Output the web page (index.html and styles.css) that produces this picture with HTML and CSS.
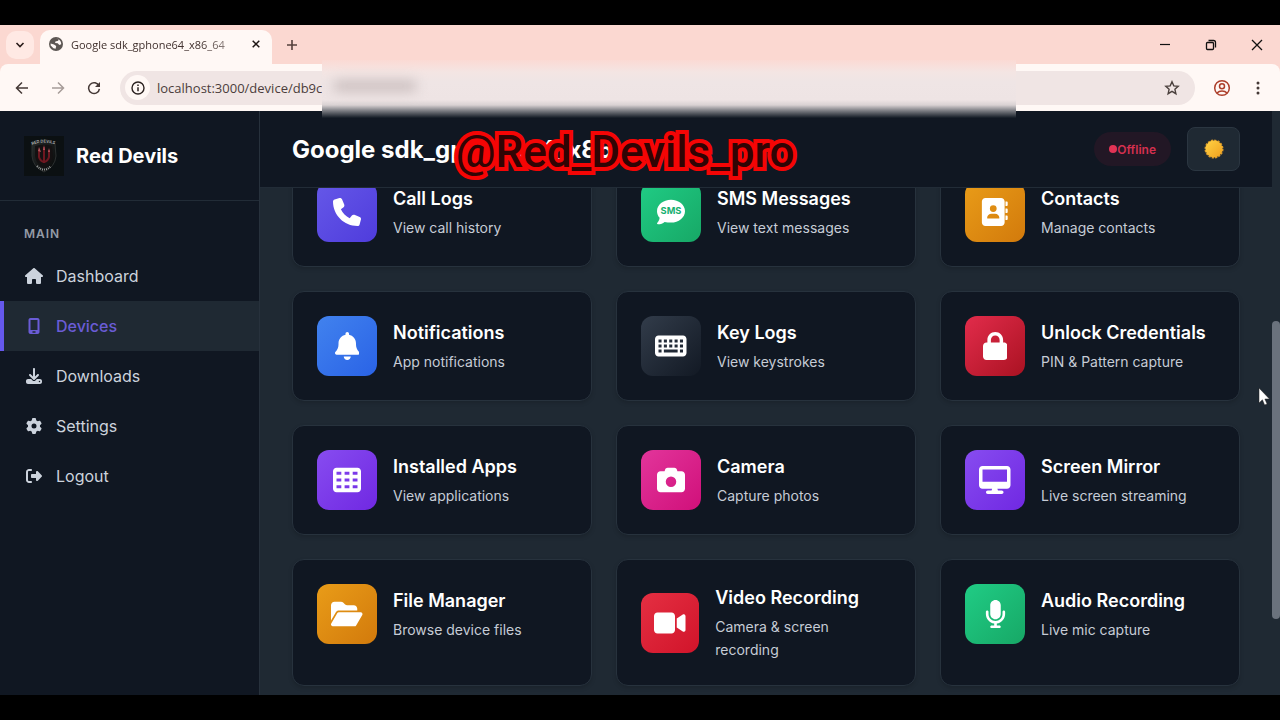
FILE: index.html
```html
<!DOCTYPE html>
<html lang="en">
<head>
    <meta charset="UTF-8">
    <meta name="viewport" content="width=device-width, initial-scale=1.0">
    <title>Google sdk_gphone64_x86_64</title>
    <link rel="stylesheet" href="styles.css">
</head>
<body>
    <div class="browser">
        <div class="tabstrip">
            <button class="tab-search" aria-label="Search tabs">
                <svg width="10" height="10" viewBox="0 0 10 10"><path d="M1.500 3L5 6.500 8.500 3" fill="none" stroke="#2b1d1b" stroke-width="1.600"/></svg>
            </button>
            <div class="tab">
                <svg width="14" height="14" viewBox="0 0 14 14"><circle cx="7" cy="7" r="7" fill="#5c5653"/><path d="M1.600 6.600L5 7.400 7.200 9l-.6 2.800-2.200-.6-2.700-2.600zM7.200 1.500l2.400.8-.4 1.500-2.800.8-.3 1.300 2.600.3L10.300 8l1.900-.7c.3-2.800-2-5.700-5-5.800z" fill="#fff8f6"/></svg>
                <span class="tab-title">Google sdk_gphone64_x86_64</span>
                <button class="tab-close" aria-label="Close tab">
                    <svg width="8" height="8" viewBox="0 0 8 8"><path d="M.7.7l6.600 6.600M7.300.7L.7 7.300" stroke="#1d1513" stroke-width="1.500"/></svg>
                </button>
            </div>
            <button class="tab-new" aria-label="New tab">
                <svg width="12" height="12" viewBox="0 0 12 12"><path d="M6 1v10M1 6h10" stroke="#55403c" stroke-width="1.600"/></svg>
            </button>
            <div class="window-buttons">
                <button aria-label="Minimize"><svg width="12" height="12" viewBox="0 0 12 12"><path d="M1 5.500h10" stroke="#111" stroke-width="1.200"/></svg></button>
                <button aria-label="Restore"><svg width="12" height="12" viewBox="0 0 12 12" fill="none" stroke="#111" stroke-width="1.300"><rect x="1.500" y="3.500" width="7" height="7" rx="1"/><path d="M3.500 1.500h5a2 2 0 0 1 2 2v5"/></svg></button>
                <button aria-label="Close"><svg width="12" height="12" viewBox="0 0 12 12"><path d="M1 1l10 10M11 1L1 11" stroke="#111" stroke-width="1.300"/></svg></button>
            </div>
        </div>
        <div class="toolbar">
            <button aria-label="Back"><svg width="14" height="14" viewBox="0 0 14 14" fill="none" stroke="#453936" stroke-width="1.500"><path d="M13 7H2M7 1.500L1.500 7 7 12.500"/></svg></button>
            <button aria-label="Forward"><svg width="14" height="14" viewBox="0 0 14 14" fill="none" stroke="#a79c99" stroke-width="1.500"><path d="M1 7h11M7 1.500L12.500 7 7 12.500"/></svg></button>
            <button aria-label="Reload"><svg width="14" height="14" viewBox="0 0 14 14"><path d="M12 5A5.400 5.400 0 1 0 12.400 7.800" fill="none" stroke="#453936" stroke-width="1.500"/><path d="M13 1v5H8z" fill="#453936"/></svg></button>
            <div class="omnibox">
                <button class="site-info" aria-label="Site information">
                    <svg width="14" height="14" viewBox="0 0 14 14"><circle cx="7" cy="7" r="6" fill="none" stroke="#2b2220" stroke-width="1.400"/><path d="M7 6.200v4.100M7 3.500V5" stroke="#2b2220" stroke-width="1.500"/></svg>
                </button>
                <input class="url" type="text" aria-label="Address" value="localhost:3000/device/db9c">
                <button aria-label="Bookmark"><svg width="16" height="16" viewBox="0 0 16 16"><path d="M8 1.800l1.800 4.100 4.400.4-3.300 3 1 4.400L8 11.400l-3.900 2.300 1-4.400-3.300-3 4.400-.4z" fill="none" stroke="#4b403d" stroke-width="1.400"/></svg></button>
            </div>
            <button class="profile" aria-label="Profile"><svg width="18" height="18" viewBox="0 0 18 18" fill="none" stroke="#ad3f2b" stroke-width="1.500"><circle cx="9" cy="9" r="7.300"/><circle cx="9" cy="7.300" r="2.500"/><path d="M4 14c2.500-2.700 7.500-2.700 10 0"/></svg></button>
            <button aria-label="Menu"><svg width="4" height="14" viewBox="0 0 4 14" fill="#453936"><circle cx="2" cy="2" r="1.500"/><circle cx="2" cy="7" r="1.500"/><circle cx="2" cy="12" r="1.500"/></svg></button>
        </div>
        <div class="redaction"><span class="smudge"></span></div>
    </div>

    <div class="app">
        <aside class="sidebar">
            <div class="brand">
                <svg class="brand-logo" width="40" height="40" viewBox="0 0 40 40">
                    <defs>
                        <linearGradient id="shield" x1="0" y1="0" x2="1" y2="1"><stop offset="0" stop-color="#252a2a"/><stop offset="1" stop-color="#080909"/></linearGradient>
                        <path id="arcTop" d="M8 9q12-5 24 0"/>
                    </defs>
                    <rect width="40" height="40" fill="#0b1012"/>
                    <path d="M8 8q12-4 23 0l1 12q-1 11-12 16Q9 31 8 20z" fill="url(#shield)" stroke="#2c3030"/>
                    <path d="M11 10q9-3 17 0l1 10q-1 8-9 12-8-4-9-12z" fill="#141112"/>
                    <g fill="none" stroke="#6e1720" stroke-width="2"><path d="M20 11v16M15 14v7q1 4 5 5M25 14v7q-1 4-5 5"/></g>
                    <path d="M14 15l1-4 2 5zM19 14l1-5 1 5zM24 16l1-4 1 4z" fill="#b0555c"/>
                    <g font-family="Inter, sans-serif" font-size="4" font-weight="700" fill="#a5a8a8"><text><textPath href="#arcTop">RED DEVILS</textPath></text></g>
                    <path d="M13 30q7 7 14 0" fill="none" stroke="#9a9d9d" stroke-width="2" stroke-dasharray="1 1"/>
                </svg>
                <span class="brand-name">Red Devils</span>
            </div>
            <nav class="nav">
                <div class="nav-title">MAIN</div>
                <a class="nav-item" href="#"><svg viewBox="0 0 576 512"><path d="M575.800 255.500c0 18-15 32.100-32 32.100h-32l.7 160.200c0 2.700-.2 5.400-.5 8.100V472c0 22.100-17.900 40-40 40H392c-22.100 0-40-17.900-40-40v-88c0-17.700-14.300-32-32-32h-64c-17.700 0-32 14.300-32 32v88c0 22.100-17.900 40-40 40h-80c-22.100 0-40-17.900-40-40V287.600H32c-18 0-32-14-32-32.100 0-9 3-17 10-24L266.400 8c7-7 15-8 22-8s15 2 21 7l255.400 224.500c8 7 12 15 11 24z"/></svg><span>Dashboard</span></a>
                <a class="nav-item active" href="#"><svg viewBox="0 0 384 512"><path fill-rule="evenodd" d="M80 0h224c35 0 64 29 64 64v384c0 35-29 64-64 64H80c-35 0-64-29-64-64V64C16 29 45 0 80 0zm0 64v320h224V64zm80 360q-24 0-24 24t24 24h64q24 0 24-24t-24-24z"/></svg><span>Devices</span></a>
                <a class="nav-item" href="#"><svg viewBox="0 0 512 512"><path fill-rule="evenodd" d="M288 32c0-17.700-14.300-32-32-32s-32 14.300-32 32v242.700l-73.400-73.400c-12.500-12.500-32.800-12.500-45.300 0s-12.500 32.800 0 45.300l128 128c12.500 12.500 32.800 12.500 45.300 0l128-128c12.500-12.500 12.500-32.800 0-45.300s-32.800-12.500-45.300 0L288 274.700V32zM64 352c-35.300 0-64 28.700-64 64v32c0 35.300 28.700 64 64 64h384c35.300 0 64-28.700 64-64v-32c0-35.300-28.700-64-64-64H346.500l-45.300 45.300c-25 25-65.500 25-90.500 0L165.500 352H64zm368 56a24 24 0 1 1 0 48 24 24 0 1 1 0-48z"/></svg><span>Downloads</span></a>
                <a class="nav-item" href="#"><svg viewBox="0 0 512 512"><path fill-rule="evenodd" d="M495.900 166.600c3.200 8.700.5 18.400-6.400 24.600l-43.300 39.400c1.100 8.300 1.700 16.800 1.700 25.400s-.6 17.100-1.700 25.400l43.300 39.400c6.900 6.200 9.600 15.900 6.400 24.600-4.400 11.900-9.700 23.300-15.800 34.300l-4.700 8.100c-6.600 11-14 21.400-22.100 31.200-5.900 7.200-15.700 9.600-24.500 6.800l-55.700-17.700c-13.400 10.300-28.200 18.900-44 25.400l-12.500 57.100c-2 9.100-9 16.300-18.200 17.800-13.800 2.300-28 3.500-42.500 3.500s-28.700-1.200-42.500-3.500c-9.200-1.500-16.200-8.700-18.200-17.800l-12.500-57.100c-15.800-6.500-30.600-15.100-44-25.400l-55.600 17.800c-8.800 2.800-18.600.3-24.500-6.800-8.100-9.800-15.500-20.200-22.100-31.200l-4.700-8.100c-6.100-11-11.400-22.400-15.800-34.300-3.200-8.700-.5-18.400 6.400-24.600l43.300-39.400C64.600 273.100 64 264.600 64 256s.6-17.100 1.700-25.400l-43.300-39.400c-6.900-6.200-9.600-15.900-6.400-24.600 4.400-11.900 9.700-23.300 15.800-34.300l4.700-8.100c6.600-11 14-21.400 22.100-31.200 5.900-7.200 15.700-9.600 24.500-6.800l55.700 17.700c13.400-10.300 28.200-18.900 44-25.400l12.500-57.100c2-9.100 9-16.300 18.200-17.800C227.300 1.200 241.500 0 256 0s28.700 1.200 42.500 3.500c9.200 1.500 16.200 8.700 18.200 17.800l12.500 57.100c15.800 6.500 30.600 15.100 44 25.400l55.700-17.700c8.800-2.800 18.600-.3 24.500 6.800 8.100 9.800 15.500 20.200 22.100 31.200l4.700 8.100c6.100 11 11.400 22.400 15.800 34.300zM256 336a80 80 0 1 0 0-160 80 80 0 1 0 0 160z"/></svg><span>Settings</span></a>
                <a class="nav-item" href="#"><svg viewBox="0 0 512 512"><path d="M377.900 105.900l122.800 122.800c7.200 7.200 11.300 17.100 11.300 27.300s-4.100 20.100-11.300 27.300L377.900 406.100c-6.400 6.400-15 9.900-24 9.900-18.700 0-33.900-15.200-33.900-33.900V320H192c-17.700 0-32-14.300-32-32v-64c0-17.700 14.300-32 32-32h128v-62.100c0-18.700 15.200-33.900 33.900-33.900 9 0 17.600 3.600 24 9.900zM160 96H96c-17.700 0-32 14.300-32 32v256c0 17.700 14.300 32 32 32h64c17.700 0 32 14.300 32 32s-14.300 32-32 32H96c-53 0-96-43-96-96V128c0-53 43-96 96-96h64c17.700 0 32 14.300 32 32s-14.300 32-32 32z"/></svg><span>Logout</span></a>
            </nav>
        </aside>

        <main class="main">
            <header class="header">
                <h1>Google sdk_gphone64_x86_64</h1>
                <span class="status"><span class="dot"></span>Offline</span>
                <button class="theme" aria-label="Toggle theme">
                    <svg width="20" height="20" viewBox="0 0 20 20">
                        <defs><linearGradient id="sun" x1="0" y1="0" x2="1" y2="1"><stop offset="0" stop-color="#ffd244"/><stop offset="1" stop-color="#f0a01e"/></linearGradient></defs>
                        <circle cx="10" cy="10" r="8.500" fill="none" stroke="#d99a2b" stroke-width="2" stroke-dasharray="2.200 1.138"/>
                        <circle cx="10" cy="10" r="8.500" fill="url(#sun)"/>
                    </svg>
                </button>
                <div class="watermark">@Red_Devils_pro</div>
            </header>

            <section class="content">
                <div class="grid">
                    <a class="card" href="#">
                        <div class="card-body">
                            <div class="icon indigo"><svg viewBox="0 0 512 512"><path d="M164.900 24.600c-7.700-18.600-28-28.500-47.400-23.200l-88 24C12.100 30.200 0 46 0 64c0 247.400 200.600 448 448 448 18 0 33.800-12.100 38.600-29.500l24-88c5.300-19.400-4.600-39.700-23.200-47.400l-96-40c-16.300-6.800-35.200-2.100-46.300 11.600L304.700 368C234.300 334.700 177.300 277.700 144 207.300l49.300-40.300c13.700-11.200 18.400-30 11.600-46.300l-40-96z"/></svg></div>
                            <div class="info"><h3>Call Logs</h3><p>View call history</p></div>
                        </div>
                    </a>
                    <a class="card" href="#">
                        <div class="card-body">
                            <div class="icon green"><svg viewBox="0 0 512 512"><path d="M256 448c141 0 256-93 256-208S397 32 256 32 0 125 0 240c0 45 18 87 48 121-4 38-21 68-42 92-13 17-3 27 13 27 48 0 91-19 120-43 35 7 75 11 117 11z"/><text x="256" y="296" text-anchor="middle" font-family="Inter, sans-serif" font-weight="700" font-size="170" fill="#18b06f">SMS</text></svg></div>
                            <div class="info"><h3>SMS Messages</h3><p>View text messages</p></div>
                        </div>
                    </a>
                    <a class="card" href="#">
                        <div class="card-body">
                            <div class="icon orange"><svg viewBox="0 0 512 512"><path fill-rule="evenodd" d="M80 0h288c35 0 64 29 64 64v384c0 35-29 64-64 64H80c-35 0-64-29-64-64V64C16 29 45 0 80 0zm144 256a62 62 0 1 0 0-124 62 62 0 1 0 0 124zm-32 32c-46 0-80 34-80 76q0 12 12 12h200q12 0 12-12c0-42-34-76-80-76z"/><path d="M448 64h24q16 0 16 16v48q0 16-16 16h-24zM448 192h24q16 0 16 16v48q0 16-16 16h-24zM448 320h24q16 0 16 16v48q0 16-16 16h-24z"/></svg></div>
                            <div class="info"><h3>Contacts</h3><p>Manage contacts</p></div>
                        </div>
                    </a>
                    <a class="card" href="#">
                        <div class="card-body">
                            <div class="icon blue"><svg viewBox="0 0 448 512"><path d="M224 0c-17.700 0-32 14.300-32 32v19.200C119 66 64 130.600 64 208v18.800c0 47-17.300 92.400-48.500 127.600l-7.400 8.300c-8.400 9.400-10.400 22.900-5.300 34.400S19.400 416 32 416h384c12.600 0 24-7.400 29.200-18.900s3.100-25-5.300-34.400l-7.400-8.300C401.300 319.200 384 273.900 384 226.800V208c0-77.400-55-142-128-156.800V32c0-17.700-14.300-32-32-32zm45.300 493.300c12-12 18.700-28.300 18.700-45.300H160c0 17 6.700 33.300 18.700 45.300S207 512 224 512s33.300-6.700 45.300-18.700z"/></svg></div>
                            <div class="info"><h3>Notifications</h3><p>App notifications</p></div>
                        </div>
                    </a>
                    <a class="card" href="#">
                        <div class="card-body">
                            <div class="icon slate"><svg viewBox="0 0 576 512"><path fill-rule="evenodd" d="M64 64h448c35 0 64 29 64 64v256c0 35-29 64-64 64H64c-35 0-64-29-64-64V128c0-35 29-64 64-64zm0 72v56h56v-56zm98 0v56h56v-56zm98 0v56h56v-56zm98 0v56h56v-56zm98 0v56h56v-56zM64 228v56h56v-56zm98 0v56h56v-56zm98 0v56h56v-56zm98 0v56h56v-56zm98 0v56h56v-56zM64 320v56h56v-56zm98 0v56h252v-56zm294 0v56h56v-56z"/></svg></div>
                            <div class="info"><h3>Key Logs</h3><p>View keystrokes</p></div>
                        </div>
                    </a>
                    <a class="card" href="#">
                        <div class="card-body">
                            <div class="icon crimson"><svg viewBox="0 0 448 512"><path fill-rule="evenodd" d="M144 144v48h160v-48c0-44.200-35.800-80-80-80s-80 35.800-80 80zm-64 48v-48C80 64.500 144.500 0 224 0s144 64.500 144 144v48h16c35.300 0 64 28.700 64 64v192c0 35.300-28.700 64-64 64H64c-35.300 0-64-28.700-64-64V256c0-35.300 28.700-64 64-64h16z"/></svg></div>
                            <div class="info"><h3>Unlock Credentials</h3><p>PIN &amp; Pattern capture</p></div>
                        </div>
                    </a>
                    <a class="card" href="#">
                        <div class="card-body">
                            <div class="icon violet"><svg viewBox="0 0 512 512"><path fill-rule="evenodd" d="M64 32h384c35 0 64 29 64 64v320c0 35-29 64-64 64H64c-35 0-64-29-64-64V96c0-35 29-64 64-64zm0 72v56h88v-56zm148 0v56h88v-56zm148 0v56h88v-56zM64 228v56h88v-56zm148 0v56h88v-56zm148 0v56h88v-56zM64 352v56h88v-56zm148 0v56h88v-56zm148 0v56h88v-56z"/></svg></div>
                            <div class="info"><h3>Installed Apps</h3><p>View applications</p></div>
                        </div>
                    </a>
                    <a class="card" href="#">
                        <div class="card-body">
                            <div class="icon pink"><svg viewBox="0 0 512 512"><path fill-rule="evenodd" d="M149.100 64.800L138.700 96H64c-35.300 0-64 28.700-64 64v256c0 35.300 28.700 64 64 64h384c35.300 0 64-28.700 64-64V160c0-35.300-28.700-64-64-64h-74.700l-10.400-31.200C356.400 45.200 338.100 32 317.400 32H194.600c-20.700 0-39 13.200-45.500 32.800zM256 192a96 96 0 1 1 0 192 96 96 0 1 1 0-192z"/></svg></div>
                            <div class="info"><h3>Camera</h3><p>Capture photos</p></div>
                        </div>
                    </a>
                    <a class="card" href="#">
                        <div class="card-body">
                            <div class="icon violet"><svg viewBox="0 0 576 512"><path fill-rule="evenodd" d="M64 0C28.700 0 0 28.700 0 64v288c0 35.300 28.700 64 64 64h176l-10.700 32H160c-17.700 0-32 14.300-32 32s14.300 32 32 32h256c17.700 0 32-14.300 32-32s-14.300-32-32-32h-69.300L336 416h176c35.300 0 64-28.700 64-64V64c0-35.300-28.700-64-64-64H64zm448 64v224H64V64h448z"/></svg></div>
                            <div class="info"><h3>Screen Mirror</h3><p>Live screen streaming</p></div>
                        </div>
                    </a>
                    <a class="card" href="#">
                        <div class="card-body">
                            <div class="icon orange"><svg viewBox="0 0 576 512"><path d="M88.700 223.800L0 375.800V96c0-35.300 28.700-64 64-64h117.500c17 0 33.300 6.700 45.300 18.700l26.500 26.500c12 12 28.300 18.700 45.300 18.700H416c35.300 0 64 28.700 64 64v32H144c-22.800 0-43.800 12.100-55.300 31.800zm27.600 16.100C122.100 230 132.600 224 144 224h400c11.500 0 22 6.100 27.700 16.100s5.700 22.200-.1 32.100l-112 192C453.900 474 443.400 480 432 480H32c-11.500 0-22-6.100-27.700-16.100s-5.700-22.200.1-32.100l112-192z"/></svg></div>
                            <div class="info"><h3>File Manager</h3><p>Browse device files</p></div>
                        </div>
                    </a>
                    <a class="card" href="#">
                        <div class="card-body">
                            <div class="icon red"><svg viewBox="0 0 576 512"><path d="M0 128c0-35.300 28.700-64 64-64h256c35.300 0 64 28.700 64 64v256c0 35.300-28.700 64-64 64H64c-35.300 0-64-28.700-64-64V128zm559.100-28.200c10.400 5.600 16.900 16.400 16.900 28.200v256c0 11.800-6.500 22.600-16.900 28.200s-23 5-32.900-1.600l-96-64-14.200-9.500V174.900l14.200-9.500 96-64c9.800-6.500 22.400-7.200 32.900-1.600z"/></svg></div>
                            <div class="info"><h3>Video Recording</h3><p>Camera &amp; screen recording</p></div>
                        </div>
                    </a>
                    <a class="card" href="#">
                        <div class="card-body">
                            <div class="icon green"><svg viewBox="0 0 384 512"><path d="M192 0c-53 0-96 43-96 96v160c0 53 43 96 96 96s96-43 96-96V96c0-53-43-96-96-96zM64 216c0-13.300-10.700-24-24-24s-24 10.700-24 24v40c0 89.100 66.200 162.700 152 174.400V464h-48c-13.300 0-24 10.700-24 24s10.700 24 24 24h144c13.300 0 24-10.700 24-24s-10.700-24-24-24h-48v-33.600c85.800-11.700 152-85.300 152-174.400v-40c0-13.300-10.700-24-24-24s-24 10.700-24 24v40c0 70.700-57.300 128-128 128S64 326.700 64 256v-40z"/></svg></div>
                            <div class="info"><h3>Audio Recording</h3><p>Live mic capture</p></div>
                        </div>
                    </a>
                </div>
            </section>
        </main>

        <div class="scrollbar"><div class="thumb"></div></div>
        <svg class="cursor" width="12" height="20" viewBox="0 0 12 20"><path d="M1 1v15l3.400-3.200L6.600 18l2.500-1-2.200-5h4.600z" fill="#fff" stroke="#222" stroke-width=".5"/></svg>
    </div>
</body>
</html>
```
FILE: styles.css
```css
* {
    box-sizing: border-box;
    margin: 0;
    padding: 0;
}

body {
    display: flex;
    flex-direction: column;
    height: 100vh;
    padding: 25px 0;
    overflow: hidden;
    background: #000;
    color: #fff;
    font-family: Inter, "Liberation Sans", sans-serif;
}

button {
    display: flex;
    align-items: center;
    justify-content: center;
    border: 0;
    background: none;
    cursor: pointer;
}

a {
    color: inherit;
    text-decoration: none;
}

/* browser */
.browser {
    position: relative;
    flex: none;
    z-index: 2;
    background: #fbd8d1;
    font-family: "Open Sans", "Noto Sans", sans-serif;
}

.tabstrip {
    display: flex;
    align-items: center;
    height: 39px;
    padding-left: 6px;
}

.tab-search {
    width: 28px;
    height: 28px;
    border-radius: 10px;
    background: #ffe9e4;
}

.tab {
    display: flex;
    align-items: center;
    align-self: flex-end;
    gap: 8px;
    width: 232px;
    height: 34px;
    margin-left: 6px;
    padding: 0 12px 6px 9px;
    border-radius: 10px 10px 0 0;
    background: #fff8f5;
}

.tab svg {
    flex: none;
}

.tab-title {
    flex: 1;
    white-space: nowrap;
    font-size: 11px;
    color: #40302d;
    -webkit-mask-image: linear-gradient(90deg, #000 80%, rgba(0, 0, 0, .5));
}

.tab-close {
    width: 8px;
    margin-left: 12px;
}

.tab-new {
    width: 40px;
    height: 28px;
}

.window-buttons {
    display: flex;
    margin-left: auto;
}

.window-buttons button {
    width: 46px;
    height: 38px;
}

.toolbar {
    display: flex;
    align-items: center;
    height: 47px;
    padding: 0 20px 0 4px;
    border-radius: 8px 8px 0 0;
    background: #fff8f5;
}

.toolbar > button {
    width: 36px;
    height: 34px;
}

.omnibox {
    display: flex;
    flex: 1;
    align-items: center;
    height: 34px;
    margin-left: 8px;
    padding: 0 15px 0 5px;
    border-radius: 17px;
    background: #f0e5e4;
}

.site-info {
    width: 25px;
    height: 25px;
    border-radius: 50%;
    background: #fff8f5;
}

.url {
    flex: 1;
    margin-left: 7px;
    border: 0;
    outline: 0;
    background: none;
    color: #4b3d3b;
    font: 13px "Open Sans", "Noto Sans", sans-serif;
}

.toolbar .profile {
    margin-left: 9px;
}

.toolbar > button:last-child {
    width: 4px;
    margin-left: 16px;
}

/* blurred strip over the rest of the address */
.redaction {
    position: absolute;
    left: 322px;
    right: 264px;
    top: 35px;
    bottom: -7px;
    background: linear-gradient(#fbdad4 0, #f4e5e3 12px, #efe5e5 22px, #eee4e4 40px, #d9d2d3 45px, #77797f 51px, #111923 100%);
}

.smudge {
    position: absolute;
    left: 12px;
    top: 20px;
    width: 82px;
    height: 12px;
    background: #cdc1c1;
    filter: blur(6px);
}

/* app */
.app {
    position: relative;
    display: flex;
    flex: 1;
    min-height: 0;
    background: #1f2933;
}

.sidebar {
    flex: none;
    width: 260px;
    border-right: 1px solid #27313c;
    background: #101722;
}

.brand {
    display: flex;
    align-items: center;
    gap: 12px;
    height: 90px;
    padding: 0 24px;
    border-bottom: 1px solid #222c37;
}

.brand-name {
    font-size: 20px;
    font-weight: 700;
}

.nav-title {
    padding: 24px 24px 8px;
    font-size: 12px;
    font-weight: 600;
    line-height: 18px;
    letter-spacing: 1px;
    color: #949ba6;
}

.nav-item {
    display: flex;
    align-items: center;
    gap: 12px;
    height: 50px;
    padding-left: 24px;
    font-size: 16px;
    color: #ccd3dd;
}

.nav-item svg {
    width: 20px;
    height: 16px;
    fill: currentColor;
}

.nav-item.active {
    padding-left: 20px;
    border-left: 4px solid #6558ec;
    background: #1f2933;
    color: #6a5cd6;
    font-weight: 500;
}

.main {
    display: flex;
    flex: 1;
    flex-direction: column;
    min-width: 0;
}

.header {
    position: relative;
    display: flex;
    flex: none;
    align-items: center;
    height: 77px;
    padding: 0 32px;
    border-bottom: 1px solid #222c37;
    background: #101722;
}

.header h1 {
    font-size: 24px;
    font-weight: 700;
}

.status {
    display: flex;
    align-items: center;
    height: 34px;
    margin-left: auto;
    padding: 0 15px;
    border-radius: 17px;
    background: #221725;
    color: #d4304f;
    font-size: 12px;
    font-weight: 600;
}

.dot {
    width: 8px;
    height: 8px;
    border-radius: 50%;
    background: #e23355;
}

.theme {
    width: 53px;
    height: 44px;
    margin-left: 16px;
    border: 1px solid #2b3641;
    border-radius: 8px;
    background: #1f2933;
}

.watermark {
    position: absolute;
    left: 196px;
    top: 16px;
    color: #300404;
    font: 500 44px/50px Roboto, sans-serif;
    -webkit-text-stroke: 8px #f50505;
    paint-order: stroke fill;
}

/* the list stays scrolled to its last row */
.content {
    display: flex;
    flex: 1;
    flex-direction: column;
    justify-content: flex-end;
    min-height: 0;
    padding: 0 32px 9px;
    overflow: hidden;
}

.grid {
    display: grid;
    grid-template-columns: repeat(3, 1fr);
    gap: 24px;
}

.card {
    padding: 24px;
    border: 1px solid #27323d;
    border-radius: 12px;
    background: #101722;
    box-shadow: 0 2px 4px rgba(0, 0, 0, .15);
}

.card-body {
    display: flex;
    align-items: center;
    gap: 16px;
}

.icon {
    display: flex;
    align-items: center;
    justify-content: center;
    width: 60px;
    height: 60px;
    border-radius: 12px;
}

.icon svg {
    height: 28px;
    fill: #fff;
}

.indigo { background: linear-gradient(135deg, #6558e8, #4f3cdc); }
.green { background: linear-gradient(135deg, #20cc85, #17a866); }
.orange { background: linear-gradient(135deg, #e99c18, #d27a0c); }
.blue { background: linear-gradient(135deg, #4182ee, #2a63e6); }
.slate { background: linear-gradient(135deg, #323c4a, #121924); }
.crimson { background: linear-gradient(135deg, #e22c4b, #aa1222); }
.violet { background: linear-gradient(135deg, #874cf0, #7028e2); }
.pink { background: linear-gradient(135deg, #e2359b, #d0107a); }
.red { background: linear-gradient(135deg, #e42f42, #d1142a); }

.info h3 {
    margin-bottom: 4px;
    font-size: 18px;
    font-weight: 600;
    line-height: 27px;
}

.info p {
    color: #c6ccd6;
    font-size: 14px;
    line-height: 23px;
}

.scrollbar {
    display: flex;
    flex: none;
    flex-direction: column;
    width: 8px;
    background: #1f2933;
}

.thumb {
    height: 51%;
    margin-top: 210px;
    border-radius: 4px;
    background: #6a727d;
}

.cursor {
    position: absolute;
    right: 10px;
    top: 276px;
}
```
